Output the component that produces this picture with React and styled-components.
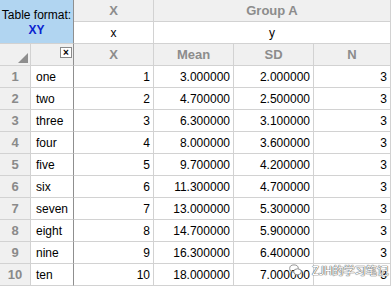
import React from "react";
import styled, { createGlobalStyle } from "styled-components";

const GlobalStyle = createGlobalStyle`
  html, body {
    margin: 0;
    padding: 0;
    background: #ffffff;
  }
  body {
    font-family: "Liberation Sans", Arial, sans-serif;
    color: #000;
  }
`;

const Page = styled.div`
  position: relative;
  width: 392px;
  height: 287px;
  overflow: hidden;
  background: #fff;
`;

const Grid = styled.div`
  display: grid;
  grid-template-columns: 31px 43px 80px 80px 80px 77px;
  grid-auto-rows: 22px;
  width: 391px;
`;

const Cell = styled.div`
  box-sizing: border-box;
  border-right: 1px solid ${({ $dark }) => ($dark ? "#8f8f8f" : "#d2d2d2")};
  border-bottom: 1px solid #d2d2d2;
  display: flex;
  align-items: center;
  justify-content: ${({ $align }) =>
    $align === "left" ? "flex-start" : $align === "right" ? "flex-end" : "center"};
  padding: ${({ $align }) =>
    $align === "left" ? "0 0 0 5px" : $align === "right" ? "0 3px 0 0" : "0"};
  background: ${({ $bg }) => $bg || "#fff"};
  grid-column: ${({ $span }) => ($span ? `span ${$span}` : "auto")};
  grid-row: ${({ $rows }) => ($rows ? `span ${$rows}` : "auto")};
  font-size: 12px;
  white-space: nowrap;
  position: relative;
`;

const HeadCell = styled(Cell)`
  background: #f0f0f0;
  color: #8c8c8c;
  font-weight: bold;
  font-size: 13px;
`;

const FormatCell = styled(Cell)`
  background: #b1d5f1;
  flex-direction: column;
  justify-content: center;
  gap: 1px;
  padding-top: 2px;
`;

const FormatLabel = styled.span`
  font-size: 12px;
  color: #000;
`;

const FormatValue = styled.span`
  font-size: 12px;
  font-weight: bold;
  color: #0a1fd0;
`;

const RowNum = styled(HeadCell)`
  color: #8a8a8a;
`;

const Corner = styled.div`
  position: absolute;
  right: 2px;
  bottom: 2px;
  width: 0;
  height: 0;
  border-left: 10px solid transparent;
  border-bottom: 10px solid #8e8e8e;
`;

const CloseBox = styled.div`
  position: absolute;
  top: 3px;
  right: 1px;
  width: 10px;
  height: 9px;
  border: 1px solid #8a8a8a;
  background: #fff;
  display: flex;
  align-items: center;
  justify-content: center;
  font-size: 10px;
  font-weight: bold;
  line-height: 1;
  color: #000;
`;

const Watermark = styled.div`
  position: absolute;
  left: 289px;
  top: 262px;
  display: flex;
  align-items: center;
  gap: 10px;
  font-family: "Noto Sans CJK SC", sans-serif;
  font-size: 11.5px;
  letter-spacing: -0.3px;
  color: #fff;
  text-shadow: 0 0 1px #555, 0 0 1px #555, 0 0 1px #777;
`;

const rows = [
  ["one", 1, "3.000000", "2.000000", 3],
  ["two", 2, "4.700000", "2.500000", 3],
  ["three", 3, "6.300000", "3.100000", 3],
  ["four", 4, "8.000000", "3.600000", 3],
  ["five", 5, "9.700000", "4.200000", 3],
  ["six", 6, "11.300000", "4.700000", 3],
  ["seven", 7, "13.000000", "5.300000", 3],
  ["eight", 8, "14.700000", "5.900000", 3],
  ["nine", 9, "16.300000", "6.400000", 3],
  ["ten", 10, "18.000000", "7.000000", 3],
];

const App = () => (
  <Page>
    <GlobalStyle />
    <Grid>
      <FormatCell $span={2} $rows={2} $dark>
        <FormatLabel>Table format:</FormatLabel>
        <FormatValue>XY</FormatValue>
      </FormatCell>
      <HeadCell>X</HeadCell>
      <HeadCell $span={3}>Group A</HeadCell>
      <Cell>x</Cell>
      <Cell $span={3}>y</Cell>

      <HeadCell>
        <Corner />
      </HeadCell>
      <HeadCell $dark>
        <CloseBox>×</CloseBox>
      </HeadCell>
      <HeadCell>X</HeadCell>
      <HeadCell>Mean</HeadCell>
      <HeadCell>SD</HeadCell>
      <HeadCell>N</HeadCell>

      {rows.map(([name, x, mean, sd, n], i) => (
        <React.Fragment key={name}>
          <RowNum>{i + 1}</RowNum>
          <Cell $align="left" $dark>{name}</Cell>
          <Cell $align="right">{x}</Cell>
          <Cell $align="right">{mean}</Cell>
          <Cell $align="right">{sd}</Cell>
          <Cell $align="right">{n}</Cell>
        </React.Fragment>
      ))}
    </Grid>
    <Watermark>
      <svg width="13" height="12" viewBox="0 0 13 12">
        <ellipse cx="5" cy="4.5" rx="4.3" ry="3.6" fill="none" stroke="#8a8a8a" strokeWidth="0.9" />
        <ellipse cx="8.5" cy="7.8" rx="3.8" ry="3" fill="#fff" stroke="#8a8a8a" strokeWidth="0.9" />
      </svg>
      <span>ZJH的学习笔记</span>
    </Watermark>
  </Page>
);

export default App;
